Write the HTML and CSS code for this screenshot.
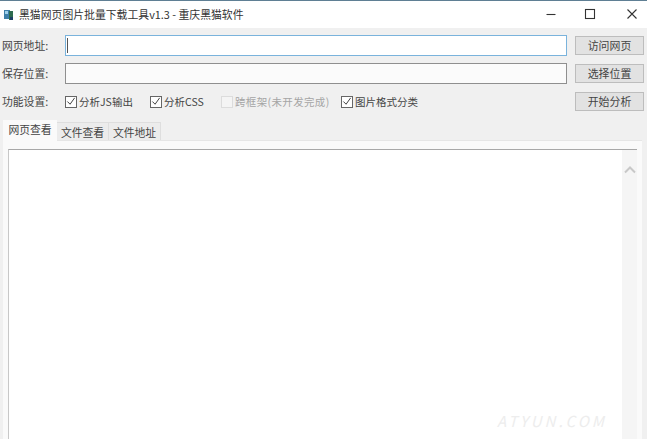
FILE: index.html
```html
<!DOCTYPE html>
<html lang="zh">
<head>
<meta charset="utf-8">
<title>黑猫网页图片批量下载工具</title>
<link rel="stylesheet" href="styles.css">
</head>
<body>
<div class="window">
  <header class="titlebar">
    <svg class="app-icon" width="14" height="14" viewBox="0 0 14 14"><rect x="2" y="2" width="6" height="9" fill="#3d7fa8"/><rect x="7" y="3" width="4" height="9" fill="#2e6b4f"/><rect x="3" y="3" width="3" height="3" fill="#9fd0ea"/><rect x="8" y="9" width="3" height="3" fill="#1f3f66"/></svg>
    <span class="title">黑猫网页图片批量下载工具v1.3 - 重庆黑猫软件</span>
    <div class="controls">
      <svg class="ctl-min" width="12" height="12" viewBox="0 0 12 12"><path d="M1.5 6.5h9" stroke="#333" stroke-width="1.1"/></svg>
      <svg class="ctl-max" width="12" height="12" viewBox="0 0 12 12"><rect x="1.5" y="1.5" width="9" height="9" fill="none" stroke="#333" stroke-width="1.1"/></svg>
      <svg width="12" height="12" viewBox="0 0 12 12"><path d="M1.5 1.5l9 9M10.5 1.5l-9 9" stroke="#333" stroke-width="1.1"/></svg>
    </div>
  </header>
  <main class="content">
    <div class="form">
      <div class="row row-url">
        <span class="label">网页地址:</span>
        <div class="field focused"><span class="caret"></span></div>
        <button class="btn">访问网页</button>
      </div>
      <div class="row row-save">
        <span class="label">保存位置:</span>
        <div class="field"></div>
        <button class="btn">选择位置</button>
      </div>
      <div class="row row-opts">
        <span class="label">功能设置:</span>
        <div class="options">
          <label class="opt opt-js"><span class="box"><svg width="11" height="11" viewBox="0 0 11 11"><path d="M1.5 5.5l3 3 5-7" fill="none" stroke="#444" stroke-width="1.1"/></svg></span>分析JS输出</label>
          <label class="opt opt-css"><span class="box"><svg width="11" height="11" viewBox="0 0 11 11"><path d="M1.5 5.5l3 3 5-7" fill="none" stroke="#444" stroke-width="1.1"/></svg></span>分析CSS</label>
          <label class="opt opt-frame disabled"><span class="box"></span>跨框架(未开发完成)</label>
          <label class="opt"><span class="box"><svg width="11" height="11" viewBox="0 0 11 11"><path d="M1.5 5.5l3 3 5-7" fill="none" stroke="#444" stroke-width="1.1"/></svg></span>图片格式分类</label>
        </div>
        <button class="btn">开始分析</button>
      </div>
    </div>
    <nav class="tabs">
      <span class="tab active">网页查看</span>
      <span class="tab">文件查看</span>
      <span class="tab">文件地址</span>
    </nav>
    <section class="panel">
      <div class="view">
        <div class="scrollbar"><svg width="12" height="8" viewBox="0 0 12 8"><path d="M1 6.5l5-5 5 5" fill="none" stroke="#c8c8c8" stroke-width="2"/></svg></div>
      </div>
    </section>
  </main>
  <span class="watermark">ATYUN.COM</span>
</div>
</body>
</html>
```
FILE: styles.css
```css
* { box-sizing: border-box; }
html, body { margin: 0; padding: 0; }
body {
  width: 647px;
  height: 439px;
  overflow: hidden;
  font-family: "Noto Sans CJK SC", "Liberation Sans", sans-serif;
  font-size: 10.5px;
  color: #444;
  background: #f0f0f0;
}
.window { position: relative; width: 647px; height: 439px; display: flex; flex-direction: column; }
.titlebar {
  height: 28px;
  flex: none;
  display: flex;
  align-items: center;
  padding-left: 2px;
  background: #fff;
  border-top: 1px solid #5f7f94;
}
.app-icon { flex: none; }
.title { margin-left: 3px; color: #333; font-size: 10.85px; white-space: nowrap; position: relative; top: -1px; }
.controls { margin-left: auto; display: flex; padding-right: 9px; position: relative; top: -1px; }
.ctl-min { margin-right: 27px; }
.ctl-max { margin-right: 30px; }
.content { flex: 1; display: flex; flex-direction: column; padding: 7px 3px 0 3px; min-height: 0; }
.form { display: flex; flex-direction: column; }
.row { display: flex; align-items: center; }
.row-url { height: 21px; }
.row-save { height: 21px; margin-top: 7px; }
.row-opts { height: 19px; margin-top: 8px; }
.label { width: 62px; flex: none; color: #444; font-size: 10.8px; white-space: nowrap; position: relative; left: -1px; top: -1px; }
.field {
  width: 502px;
  height: 100%;
  flex: none;
  background: #fbfbfb;
  border: 1px solid #8f8f8f;
  display: flex;
  align-items: center;
  padding-left: 1px;
}
.field.focused { background: #fff; border-color: #7ab3dc; }
.caret { width: 1px; height: 15px; background: #555; }
.btn {
  width: 69px;
  height: 19px;
  flex: none;
  margin-left: 8px;
  padding: 0 0 1px;
  border: 1px solid #bdbdbd;
  background: #e2e2e2;
  color: #444;
  font: inherit;
  font-size: 10.9px;
  line-height: 16px;
}
.options { width: 502px; flex: none; display: flex; align-items: center; }
.opt { display: flex; align-items: center; white-space: nowrap; gap: 1px; color: #444; }
.opt-js { width: 85px; }
.opt-css { width: 71px; }
.opt-frame { width: 120px; letter-spacing: .35px; }
.box {
  width: 12px;
  height: 12px;
  flex: none;
  margin-right: 1px;
  background: #fff;
  border: 1px solid #666;
  display: flex;
  align-items: center;
  justify-content: center;
}
.disabled { color: #a5a5a5; }
.disabled .box { border-color: #dcdcdc; background: #f4f4f4; }
.tabs { display: flex; margin-top: 10px; height: 19px; flex: none; font-size: 10.8px; }
.tab {
  width: 52px;
  height: 19px;
  margin-top: 1px;
  background: #ececec;
  border: 1px solid #dedede;
  border-bottom: 0;
  border-left: 0;
  text-align: center;
  line-height: 18px;
  color: #444;
}
.tab.active {
  width: 54px;
  height: 21px;
  margin-top: -1px;
  background: #fafafa;
  border: 0;
  line-height: 19px;
  position: relative;
  z-index: 1;
}
.panel {
  flex: 1;
  min-height: 0;
  width: 639px;
  background: #fafafa;
  padding: 8px 5px 0 5px;
  border-top: 1px solid #e6e6e6;
}
.view {
  height: 100%;
  background: #fff;
  border-top: 1px solid #a8a8a8;
  border-left: 1px solid #c8c8c8;
  display: flex;
  justify-content: flex-end;
}
.scrollbar {
  width: 15px;
  background: #f5f5f5;
  display: flex;
  justify-content: center;
  padding-top: 16px;
}
.watermark {
  position: absolute;
  left: 497px;
  top: 410px;
  font-size: 15px;
  font-style: italic;
  letter-spacing: 3px;
  color: #ededed;
  white-space: nowrap;
}
```
